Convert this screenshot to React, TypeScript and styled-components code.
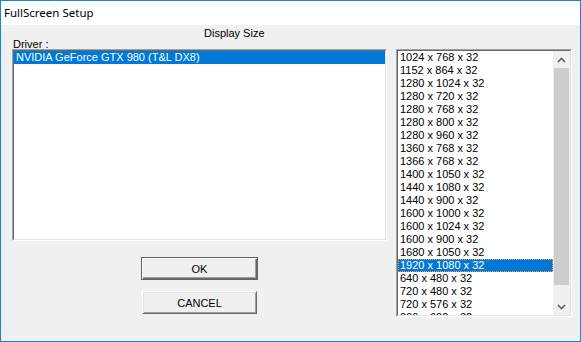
import React from "react";
import styled, { createGlobalStyle } from "styled-components";

const Global = createGlobalStyle`
  html, body { margin: 0; padding: 0; background: #f0f0f0; }
  body { font-family: "Liberation Sans", Arial, sans-serif; }
  * { box-sizing: border-box; }
`;

const Window = styled.div`
  width: 581px;
  height: 342px;
  border: 1px solid #1883d7;
  background: #f0f0f0;
  display: flex;
  flex-direction: column;
  overflow: hidden;
`;

const TitleBar = styled.div`
  height: 24px;
  flex: none;
  background: #ffffff;
  display: flex;
  align-items: center;
  padding-left: 3px;
  padding-bottom: 1px;
  font-family: "Noto Sans", "Open Sans", sans-serif;
  font-size: 11.5px;
  color: #000;
`;

const Client = styled.div`
  flex: 1;
  display: grid;
  grid-template-columns: 375px 176px;
  grid-template-rows: 12px 10px 192px auto;
  align-content: start;
  column-gap: 9px;
  padding: 2px 8px 0 11px;
  font-size: 11px;
  color: #000;
`;

const Heading = styled.div`
  grid-column: 1;
  grid-row: 1;
  line-height: 12px;
  padding-left: 192px;
  white-space: nowrap;
`;

const FieldLabel = styled.div`
  grid-column: 1;
  grid-row: 2;
  line-height: 10px;
  padding-left: 1px;
  white-space: nowrap;
`;

const ListFrame = styled.div<{ $area: string; $height: number }>`
  grid-area: ${(p) => p.$area};
  height: ${(p) => p.$height}px;
  border-style: solid;
  border-width: 1px;
  border-color: #a0a0a0 #ffffff #ffffff #a0a0a0;
  display: flex;
`;

const ListInner = styled.div`
  flex: 1;
  display: flex;
  min-width: 0;
  border-style: solid;
  border-width: 1px;
  border-color: #696969 #e3e3e3 #e3e3e3 #696969;
  background: #ffffff;
`;

const Rows = styled.div`
  flex: 1;
  min-width: 0;
  overflow: hidden;
  display: flex;
  flex-direction: column;
`;

const Row = styled.div<{ $selected?: boolean; $focused?: boolean }>`
  flex: none;
  height: 13px;
  line-height: 13px;
  padding-left: 2px;
  white-space: nowrap;
  background: ${(p) => (p.$selected ? "#0078d7" : "transparent")};
  color: ${(p) => (p.$selected ? "#ffffff" : "#000000")};
  outline: ${(p) => (p.$focused ? "1px dotted #f7a23c" : "none")};
  outline-offset: -1px;
`;

const ScrollBar = styled.div`
  width: 17px;
  flex: none;
  background: #f0f0f0;
  display: flex;
  flex-direction: column;
`;

const ArrowButton = styled.div`
  height: 17px;
  flex: none;
  display: flex;
  align-items: center;
  justify-content: center;
`;

const Track = styled.div`
  flex: 1;
  display: flex;
  flex-direction: column;
  padding: 0 1px 13px 1px;
`;

const Thumb = styled.div`
  flex: 1;
  background: #cdcdcd;
`;

const ButtonColumn = styled.div`
  grid-column: 1;
  grid-row: 4;
  display: flex;
  flex-direction: column;
  align-items: center;
  gap: 11px;
  padding-top: 16px;
`;

const Button = styled.button<{ $default?: boolean; $width: number }>`
  width: ${(p) => p.$width}px;
  height: 23px;
  margin: 0;
  padding: 0;
  font-family: "Liberation Sans", Arial, sans-serif;
  font-size: 11px;
  color: #000;
  background: #f0f0f0;
  border-style: solid;
  border-width: 1px;
  border-color: ${(p) =>
    p.$default ? "#646464" : "#ffffff #696969 #696969 #ffffff"};
  box-shadow: ${(p) =>
    p.$default
      ? "inset 1px 1px #ffffff, inset -1px -1px #696969, inset -2px -2px #a0a0a0"
      : "inset 1px 1px #e3e3e3, inset -1px -1px #a0a0a0"};
  display: flex;
  align-items: center;
  justify-content: center;
`;

const Chevron = ({ up }: { up?: boolean }) => (
  <svg width="9" height="6" viewBox="0 0 9 6">
    <path
      d={up ? "M1 5 L4.5 1.5 L8 5" : "M1 1 L4.5 4.5 L8 1"}
      fill="none"
      stroke="#606060"
      strokeWidth="1.6"
    />
  </svg>
);

const modes = [
  "1024 x 768 x 32",
  "1152 x 864 x 32",
  "1280 x 1024 x 32",
  "1280 x 720 x 32",
  "1280 x 768 x 32",
  "1280 x 800 x 32",
  "1280 x 960 x 32",
  "1360 x 768 x 32",
  "1366 x 768 x 32",
  "1400 x 1050 x 32",
  "1440 x 1080 x 32",
  "1440 x 900 x 32",
  "1600 x 1000 x 32",
  "1600 x 1024 x 32",
  "1600 x 900 x 32",
  "1680 x 1050 x 32",
  "1920 x 1080 x 32",
  "640 x 480 x 32",
  "720 x 480 x 32",
  "720 x 576 x 32",
  "800 x 600 x 32",
];

export default function App() {
  return (
    <>
      <Global />
      <Window>
        <TitleBar>FullScreen Setup</TitleBar>
        <Client>
          <Heading>Display Size</Heading>
          <FieldLabel>Driver :</FieldLabel>
          <ListFrame $area="3 / 1 / 4 / 2" $height={192}>
            <ListInner>
              <Rows>
                <Row $selected>NVIDIA GeForce GTX 980 (T&amp;L DX8)</Row>
              </Rows>
            </ListInner>
          </ListFrame>
          <ListFrame $area="3 / 2 / 5 / 3" $height={268}>
            <ListInner>
              <Rows>
                {modes.map((m) => (
                  <Row
                    key={m}
                    $selected={m === "1920 x 1080 x 32"}
                    $focused={m === "1920 x 1080 x 32"}
                  >
                    {m}
                  </Row>
                ))}
              </Rows>
              <ScrollBar>
                <ArrowButton>
                  <Chevron up />
                </ArrowButton>
                <Track>
                  <Thumb />
                </Track>
                <ArrowButton>
                  <Chevron />
                </ArrowButton>
              </ScrollBar>
            </ListInner>
          </ListFrame>
          <ButtonColumn>
            <Button $default $width={117}>OK</Button>
            <Button $width={115}>CANCEL</Button>
          </ButtonColumn>
        </Client>
      </Window>
    </>
  );
}
